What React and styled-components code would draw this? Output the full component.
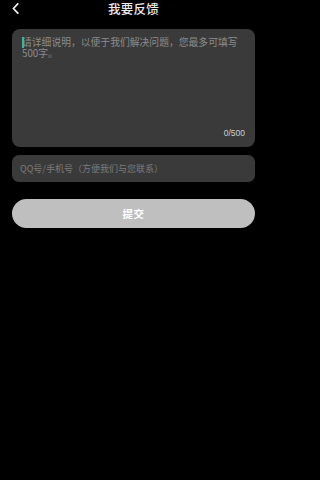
import React, { useState } from 'react'
import styled, { createGlobalStyle } from 'styled-components'

const GlobalStyle = createGlobalStyle`
    html, body {
        margin: 0;
        padding: 0;
        background: #000;
    }
    body {
        font-family: "Noto Sans CJK SC", "Noto Sans", sans-serif;
    }
`

const Page = styled.div`
    width: 267px;
    min-height: 480px;
    background: #000;
    display: flex;
    flex-direction: column;
    padding: 0 12px;
    box-sizing: border-box;
`

const Header = styled.div`
    position: relative;
    height: 17px;
    display: flex;
    align-items: center;
    justify-content: center;
`

const BackButton = styled.button`
    position: absolute;
    left: 0;
    top: 3px;
    width: 10px;
    height: 11px;
    padding: 0;
    border: none;
    background: none;
    display: flex;
`

const Title = styled.h1`
    margin: 0;
    font-size: 12.5px;
    line-height: 17px;
    font-weight: 500;
    color: #ececec;
    letter-spacing: 0.3px;
`

const Form = styled.form`
    display: flex;
    flex-direction: column;
    margin-top: 12px;
`

const TextBox = styled.div`
    position: relative;
    height: 118px;
    background: #3a3a3a;
    border-radius: 8px;
    display: flex;
    flex-direction: column;
    padding: 8px 10px 9px 10px;
    box-sizing: border-box;
`

const TextArea = styled.textarea`
    flex: 1;
    margin: 0;
    padding: 0;
    border: none;
    outline: none;
    resize: none;
    background: transparent;
    color: #ddd;
    font-family: "Noto Sans CJK SC", sans-serif;
    font-size: 9.8px;
    line-height: 11px;

    &::placeholder {
        color: #8c8c8c;
    }
`

const Caret = styled.span`
    position: absolute;
    left: 10px;
    top: 8px;
    width: 1.5px;
    height: 11px;
    background: #35b8a6;
`

const Counter = styled.div`
    align-self: flex-end;
    font-family: "Liberation Sans", sans-serif;
    font-size: 8.5px;
    line-height: 10px;
    color: #cfcfcf;
`

const Contact = styled.input`
    margin-top: 8px;
    height: 27px;
    padding: 0 8px;
    border: none;
    outline: none;
    border-radius: 7px;
    background: #3a3a3a;
    color: #ddd;
    font-family: "Noto Sans CJK SC", sans-serif;
    font-size: 9px;
    box-sizing: border-box;

    &::placeholder {
        color: #7a7a7a;
    }
`

const Submit = styled.button`
    margin-top: 17px;
    height: 29px;
    border: none;
    border-radius: 15px;
    background: ${props => props.$active ? '#e6e6e6' : '#bfbfbf'};
    color: #fff;
    font-family: "Noto Sans CJK SC", sans-serif;
    font-size: 10.5px;
    font-weight: 700;
    letter-spacing: 0.5px;
`

function App() {
    const [text, setText] = useState('')
    const [contact, setContact] = useState('')

    return (
        <Page>
            <GlobalStyle />
            <Header>
                <BackButton type="button">
                    <svg width="7" height="11" viewBox="0 0 7 11">
                        <path d="M5.8 0.8 L1.4 5.5 L5.8 10.2" fill="none" stroke="#f2f2f2" strokeWidth="1.7" strokeLinecap="round" strokeLinejoin="round" />
                    </svg>
                </BackButton>
                <Title>我要反馈</Title>
            </Header>
            <Form onSubmit={e => e.preventDefault()}>
                <TextBox>
                    <TextArea
                        maxLength={500}
                        value={text}
                        onChange={e => setText(e.target.value)}
                        placeholder="请详细说明，以便于我们解决问题，您最多可填写500字。"
                    />
                    {text === '' && <Caret />}
                    <Counter>{text.length}/500</Counter>
                </TextBox>
                <Contact
                    type="text"
                    value={contact}
                    onChange={e => setContact(e.target.value)}
                    placeholder="QQ号/手机号（方便我们与您联系）"
                />
                <Submit type="submit" $active={text.trim() !== ''}>提交</Submit>
            </Form>
        </Page>
    )
}

export default App
